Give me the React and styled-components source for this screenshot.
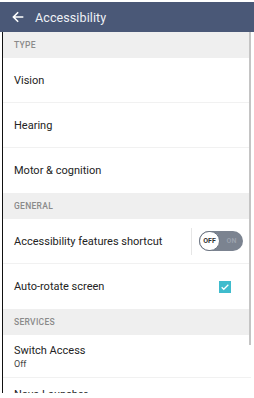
import React from "react";
import styled, { createGlobalStyle } from "styled-components";

const Global = createGlobalStyle`
  html, body { margin: 0; padding: 0; background: #fff; }
  body { font-family: Roboto, "Noto Sans", sans-serif; width: 254px; height: 398px; overflow: hidden; }
`;

const Screen = styled.div`
  width: 254px;
  height: 398px;
  display: flex;
  flex-direction: column;
  padding-top: 2px;
  box-sizing: border-box;
  background: #fff;
`;

const Header = styled.div`
  height: 30px;
  flex: none;
  background: #4a5877;
  display: flex;
  align-items: center;
  padding-left: 10px;
  gap: 9px;
  color: #fff;
  font-size: 12.5px;
`;

const Title = styled.span`
  color: #eef1f6;
  letter-spacing: 0.1px;
`;

const Body = styled.div`
  position: relative;
  height: 361px;
  margin-left: 2px;
  margin-right: 3px;
  border-left: 1.5px solid #111;
  overflow: hidden;
  display: flex;
  flex-direction: column;
`;

const Scroll = styled.div`
  position: absolute;
  right: 0;
  top: 0;
  width: 2px;
  height: 313px;
  background: #c4c4c4;
`;

const Section = styled.div`
  height: 26px;
  flex: none;
  background: #efefef;
  display: flex;
  align-items: center;
  padding-left: 11px;
  font-size: 8.5px;
  font-weight: 500;
  color: #8a8a8a;
  letter-spacing: 0.3px;
`;

const Row = styled.div`
  height: ${(p) => p.$h || 45}px;
  flex: none;
  display: flex;
  align-items: ${(p) => (p.$top ? "flex-start" : "center")};
  padding-top: ${(p) => (p.$top ? "10px" : "0")};
  padding-left: 11px;
  padding-right: 10px;
  border-bottom: ${(p) => (p.$last ? "none" : "1px solid #f1f1f1")};
  box-sizing: border-box;
  font-size: 11px;
  color: #232323;
`;

const Label = styled.div`
  flex: 1;
  display: flex;
  flex-direction: column;
  gap: 2px;
`;

const Sub = styled.span`
  font-size: 9px;
  color: #444;
`;

const VDivider = styled.div`
  width: 1px;
  height: 27px;
  background: #e6e6e6;
  margin-right: 7px;
`;

const Toggle = styled.div`
  width: 44px;
  height: 20px;
  border-radius: 10px;
  background: #7b8390;
  display: flex;
  align-items: center;
  font-size: 7px;
  font-weight: 700;
`;

const Knob = styled.div`
  width: 21px;
  height: 20px;
  border-radius: 10px;
  background: #fff;
  box-sizing: border-box;
  border: 1px solid #6d7582;
  display: flex;
  align-items: center;
  justify-content: center;
  color: #333;
`;

const On = styled.span`
  flex: 1;
  text-align: center;
  color: #9aa1ac;
`;

const Check = styled.div`
  width: 12px;
  height: 12px;
  background: #3fbccd;
  margin-right: 10px;
  display: flex;
  align-items: center;
  justify-content: center;
`;

export default function App() {
  return (
    <>
      <Global />
      <Screen>
        <Header>
          <svg width="16" height="16" viewBox="0 0 24 24">
            <path d="M20 10.8H7.9l5.2-5.2L11.4 4 3.4 12l8 8 1.7-1.6-5.2-5.2H20z" fill="#fff" />
          </svg>
          <Title>Accessibility</Title>
        </Header>
        <Body>
          <Scroll />
          <Section>TYPE</Section>
          <Row>Vision</Row>
          <Row>Hearing</Row>
          <Row $last>Motor &amp; cognition</Row>
          <Section>GENERAL</Section>
          <Row style={{ paddingRight: 8 }}>
            <Label>Accessibility features shortcut</Label>
            <VDivider />
            <Toggle>
              <Knob>OFF</Knob>
              <On>ON</On>
            </Toggle>
          </Row>
          <Row $last>
            <Label>Auto-rotate screen</Label>
            <Check>
              <svg width="10" height="10" viewBox="0 0 24 24">
                <path d="M4 12.5l5 5L20 6.5" fill="none" stroke="#fff" strokeWidth="3" />
              </svg>
            </Check>
          </Row>
          <Section>SERVICES</Section>
          <Row $h={43} $top style={{ paddingTop: 9 }}>
            <Label>
              <span>Switch Access</span>
              <Sub>Off</Sub>
            </Label>
          </Row>
          <Row $last $top>
            <Label>Nova Launcher</Label>
          </Row>
        </Body>
      </Screen>
    </>
  );
}
